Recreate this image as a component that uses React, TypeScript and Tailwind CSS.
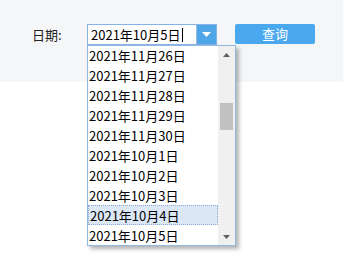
import React from "react";

const items = [
  "2021年11月26日",
  "2021年11月27日",
  "2021年11月28日",
  "2021年11月29日",
  "2021年11月30日",
  "2021年10月1日",
  "2021年10月2日",
  "2021年10月3日",
  "2021年10月4日",
  "2021年10月5日",
];

export default function App() {
  const font = { fontFamily: '"Noto Sans CJK SC", "Noto Sans", sans-serif' };
  return (
    <div className="w-[343px] h-[270px] bg-white relative overflow-hidden" style={font}>
      <div className="h-[82px] bg-[#f5f6f8] flex items-start pl-[32px] pt-[24px]">
        <div className="w-[55px] h-[21px] flex items-center text-[13px] text-[#222]">日期:</div>
        <div className="relative">
          <div className="w-[130px] h-[21px] flex border border-[#86b3e6] bg-white">
            <div className="flex-1 flex items-center pl-[3px] text-[13px] text-black leading-none">
              2021年10月5日<span className="inline-block w-px h-[14px] bg-black ml-[1px]" />
            </div>
            <div className="w-[20px] h-full bg-[#4ea6e8] border-l border-[#9fb9d6] flex items-center justify-center">
              <svg width="9" height="5" viewBox="0 0 9 5"><path d="M0 0H9L4.5 5Z" fill="#fff" /></svg>
            </div>
          </div>
          <div className="absolute left-0 top-[21px] w-[149px] h-[201px] bg-white border border-[#92b8e4] shadow-[3px_3px_4px_rgba(0,0,0,0.3)] flex z-10">
            <div className="flex-1 flex flex-col">
              {items.map((t, i) => (
                <div
                  key={t}
                  className={
                    "h-[20px] flex items-center pl-[1px] text-[13px] text-black leading-none " +
                    (i === 8 ? "bg-[#dce7f6] border border-dotted border-[#8ea9d4]" : "")
                  }
                >
                  {t}
                </div>
              ))}
            </div>
            <div className="w-[17px] bg-[#f0f0f0] flex flex-col items-center">
              <div className="h-[17px] w-full flex items-center justify-center">
                <svg width="7" height="4" viewBox="0 0 7 4"><path d="M0 4H7L3.5 0Z" fill="#606060" /></svg>
              </div>
              <div className="h-[40px]" />
              <div className="w-[13px] h-[27px] bg-[#c1c1c1]" />
              <div className="flex-1" />
              <div className="h-[17px] w-full flex items-center justify-center">
                <svg width="7" height="4" viewBox="0 0 7 4"><path d="M0 0H7L3.5 4Z" fill="#606060" /></svg>
              </div>
            </div>
          </div>
        </div>
        <div className="ml-[18px] w-[80px] h-[20px] bg-[#4aa8ee] rounded-[2px] flex items-center justify-center text-[13px] text-white">
          查询
        </div>
      </div>
    </div>
  );
}
